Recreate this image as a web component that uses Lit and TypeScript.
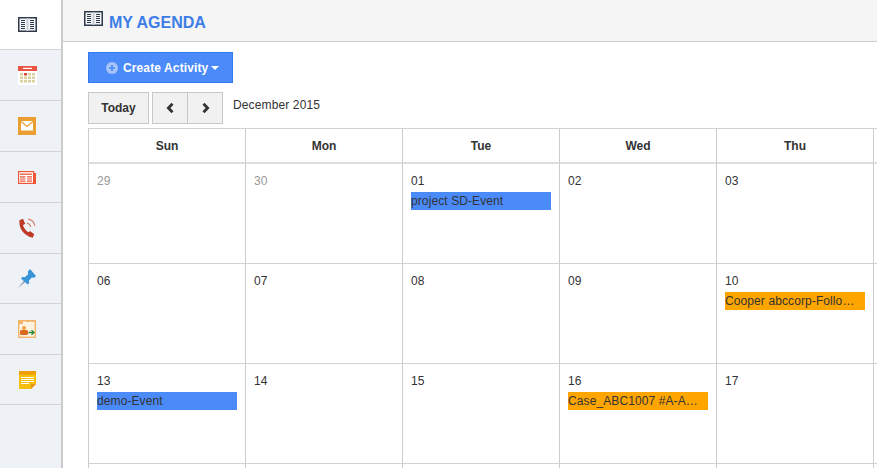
import { LitElement, html, css, svg } from "lit";
import { customElement } from "lit/decorators.js";

const book = (w: number, h: number) => svg`<svg width=${w} height=${h} viewBox="0 0 19 15">
<rect x=".75" y=".75" width="17.5" height="13.5" fill="#f3f4f6" stroke="#2f3a4c" stroke-width="1.5"/>
<rect x="8.5" y="1" width="2" height="13" fill="#c9ced6"/>
<path d="M3 3.5h4M3 5.5h4M3 7.5h4M3 9.5h4M3 11.5h4M12 3.5h4M12 5.5h4M12 7.5h4M12 9.5h4M12 11.5h4" stroke="#2f3a4c" stroke-width="1"/></svg>`;

const icons = [
  book(19, 15),
  svg`<svg width="19" height="19" viewBox="0 0 19 19"><rect width="19" height="19" fill="#fff"/><rect width="19" height="5" fill="#ea5443"/><rect x="5" y="1.8" width="9" height="1.2" fill="#fff"/>
  <g fill="#dccfa0"><rect x="2" y="7" width="3" height="2.5"/><rect x="6" y="7" width="3" height="2.5" fill="#d9463a"/><rect x="10" y="7" width="3" height="2.5"/><rect x="14" y="7" width="3" height="2.5"/><rect x="2" y="10.5" width="3" height="2.5"/><rect x="6" y="10.5" width="3" height="2.5"/><rect x="10" y="10.5" width="3" height="2.5"/><rect x="14" y="10.5" width="3" height="2.5"/><rect x="2" y="14" width="3" height="2.5"/><rect x="6" y="14" width="3" height="2.5"/><rect x="10" y="14" width="3" height="2.5"/><rect x="14" y="14" width="3" height="2.5"/></g></svg>`,
  svg`<svg width="18" height="18" viewBox="0 0 18 18"><rect width="18" height="18" fill="#eb9f33"/><rect x="3" y="4" width="12" height="9.5" fill="#fff"/><path d="M3 4.500l6 5 6-5" fill="none" stroke="#eb9f33" stroke-width="1.300"/></svg>`,
  svg`<svg width="18" height="13" viewBox="0 0 18 13"><rect x="15" y="2" width="3" height="11" fill="#ee5539"/><rect x=".6" y=".6" width="15" height="11.800" fill="#fff" stroke="#ee5539" stroke-width="1.200"/><path d="M2 3.200h12" stroke="#ee5539" stroke-width="1.300"/><path d="M2 5.800h5.500M9 5.800h5M2 8h5.500M9 8h5M2 10.200h5.500M9 10.200h5" stroke="#ee5539" stroke-width="1.200"/></svg>`,
  svg`<svg width="18" height="20" viewBox="0 0 18 20"><path d="M3 3.500C2.800 10 7 16 13 17" fill="none" stroke="#bf3a26" stroke-width="3.200"/><path d="M1 2.500L5 .8l2.200 5-3.200 2zM10 14.800l2-1.800 4.200 3.200-1.500 3.500-4.200-1.200z" fill="#bf3a26"/><path d="M8.800 5c2.200.4 3.500 1.800 3.900 4M10 1.200c3.700.5 6.200 3 6.800 6.800" fill="none" stroke="#d9836f" stroke-width="1.200"/></svg>`,
  svg`<svg width="18" height="19" viewBox="0 0 18 19"><path d="M0 19l6.500-8 1.500 1.500z" fill="#98a2ad"/><path d="M12 0l6 7-2 1.800-2.200-.3-2.800 3 .2 2.700-1.500 1.300L3 9.500 4.300 8l2.500.2 3.300-3-.2-2.700z" fill="#3a94d8"/></svg>`,
  svg`<svg width="18" height="18" viewBox="0 0 18 18"><rect x=".7" y=".7" width="16.600" height="16.600" fill="#fdf3e0" stroke="#f2b56b" stroke-width="1.400"/><rect x="0" y="0" width="5" height="4" fill="#f2b56b"/><rect x="8" y="0" width="3.500" height="2" fill="#f2b56b"/><rect x="13" y="0" width="3.500" height="2" fill="#f2b56b"/><circle cx="6" cy="8" r="2" fill="#f0a040"/><rect x="2" y="10" width="8" height="5" rx="1.500" fill="#d9691e"/><path d="M10.500 12.500h5M13.500 10.300l2.500 2.200-2.500 2.200" fill="none" stroke="#2e8b3c" stroke-width="1.400"/></svg>`,
  svg`<svg width="17" height="18" viewBox="0 0 17 18"><path d="M0 0h17v13l-5 5H0z" fill="#f5bd0c"/><rect width="17" height="3.500" fill="#f09d0a"/><path d="M2 6.500h13M2 8.500h13M2 10.500h13M2 12.500h8" stroke="#fff" stroke-width="1.100"/><path d="M12 18v-5h5z" fill="#e8941a"/></svg>`,
];

type Ev = { t: string; c: "b" | "o" };
type Day = { n: string; muted?: boolean; ev?: Ev };
const weeks: Day[][] = [
  [{ n: "29", muted: true }, { n: "30", muted: true }, { n: "01", ev: { t: "project SD-Event", c: "b" } }, { n: "02" }, { n: "03" }, { n: "" }],
  [{ n: "06" }, { n: "07" }, { n: "08" }, { n: "09" }, { n: "10", ev: { t: "Cooper abccorp-Follo…", c: "o" } }, { n: "" }],
  [{ n: "13", ev: { t: "demo-Event", c: "b" } }, { n: "14" }, { n: "15" }, { n: "16", ev: { t: "Case_ABC1007 #A-A…", c: "o" } }, { n: "17" }, { n: "" }],
  [{ n: "" }, { n: "" }, { n: "" }, { n: "" }, { n: "" }, { n: "" }],
];
const heads = ["Sun", "Mon", "Tue", "Wed", "Thu", ""];

@customElement("app-root")
export class AppRoot extends LitElement {
  static styles = css`
    :host { display: flex; width: 877px; height: 468px; overflow: hidden; background: #fff; font-family: "Liberation Sans", Arial, sans-serif; font-size: 12px; color: #333; }
    .side { width: 61px; flex: none; background: #eef1f6; border-right: 2px solid #ccc; }
    .tab { height: 50px; border-bottom: 1px solid #d3d3d3; display: flex; align-items: center; justify-content: center; padding-right: 7px; }
    .tab:nth-child(1) { background: #fff; height: 49px; }
    .tab:nth-child(6), .tab:nth-child(8) { height: 49px; }
    .main { flex: 1; min-width: 0; display: flex; flex-direction: column; }
    .head { height: 41px; flex: none; background: #f5f5f5; border-bottom: 1px solid #ccc; display: flex; align-items: flex-start; padding-left: 21px; gap: 6px; }
    .head svg { margin-top: 11px; }
    .head h1 { margin: 14px 0 0; font-size: 16px; line-height: 18px; font-weight: 700; color: #3c7de6; }
    .body { padding: 10px 0 0 25px; }
    .create { width: 145px; height: 31px; box-sizing: border-box; background: #4a8af9; border: 1px solid #3478f0; color: #fff; font-weight: 700; display: flex; align-items: center; padding-left: 17px; gap: 5px; letter-spacing: .12px; }
    .plus { width: 12px; height: 12px; }
    .caret { width: 0; height: 0; border: 4px solid transparent; border-top-color: #fff; border-bottom: 0; margin-left: -2px; margin-top: 1px; }
    .tools { display: flex; margin-top: 9px; height: 36px; }
    .btn { height: 32px; box-sizing: border-box; background: #f1f1f1; border: 1px solid #c8c8c8; display: flex; align-items: center; justify-content: center; color: #333; }
    .today { width: 61px; font-weight: 700; font-size: 12px; }
    .pair { display: flex; margin-left: 3px; }
    .pair .btn { width: 36px; }
    .pair .btn + .btn { margin-left: -1px; }
    .month { margin: 6px 0 0 10px; line-height: 14px; font-size: 12px; letter-spacing: .13px; }
    .grid { display: grid; grid-template-columns: repeat(6, 157px); grid-template-rows: 35px 100px 100px 100px 100px; border-top: 1px solid #d3d3d3; border-left: 1px solid #ccc; width: 945px; }
    .th { border-right: 1px solid #ccc; border-bottom: 2px solid #ddd; font-weight: 700; display: flex; align-items: center; justify-content: center; padding-top: 1px; box-sizing: border-box; }
    .td { border-right: 1px solid #ccc; border-bottom: 1px solid #d3d3d3; padding: 10px 0 0 8px; box-sizing: border-box; min-width: 0; line-height: 14px; }
    .muted { color: #999; }
    .ev { width: 140px; height: 18px; line-height: 18px; margin-top: 4px; white-space: nowrap; letter-spacing: .1px; }
    .b { background: #4a8af9; }
    .o { background: #ffa500; }
  `;

  render() {
    return html`
      <nav class="side">${icons.map((i) => html`<div class="tab">${i}</div>`)}</nav>
      <div class="main">
        <header class="head">${book(19, 15)}<h1>MY AGENDA</h1></header>
        <div class="body">
          <div class="create">
            <svg class="plus" viewBox="0 0 14 14"><circle cx="7" cy="7" r="7" fill="#a9c5f7"/><path d="M7 3.500v7M3.500 7h7" stroke="#4a8af9" stroke-width="2"/></svg>
            <span>Create Activity</span><span class="caret"></span>
          </div>
          <div class="tools">
            <div class="btn today">Today</div>
            <div class="pair">
              <div class="btn"><svg width="9" height="12" viewBox="0 0 9 12"><path d="M6.500 1.800L2.400 6l4.100 4.200" fill="none" stroke="#333" stroke-width="2.800"/></svg></div>
              <div class="btn"><svg width="9" height="12" viewBox="0 0 9 12"><path d="M2.500 1.800L6.600 6l-4.100 4.200" fill="none" stroke="#333" stroke-width="2.800"/></svg></div>
            </div>
            <div class="month">December 2015</div>
          </div>
          <div class="grid">
            ${heads.map((h) => html`<div class="th">${h}</div>`)}
            ${weeks.flat().map((d) => html`<div class="td">
              <div class=${d.muted ? "muted" : ""}>${d.n}</div>
              ${d.ev ? html`<div class="ev ${d.ev.c}">${d.ev.t}</div>` : ""}
            </div>`)}
          </div>
        </div>
      </div>`;
  }
}
